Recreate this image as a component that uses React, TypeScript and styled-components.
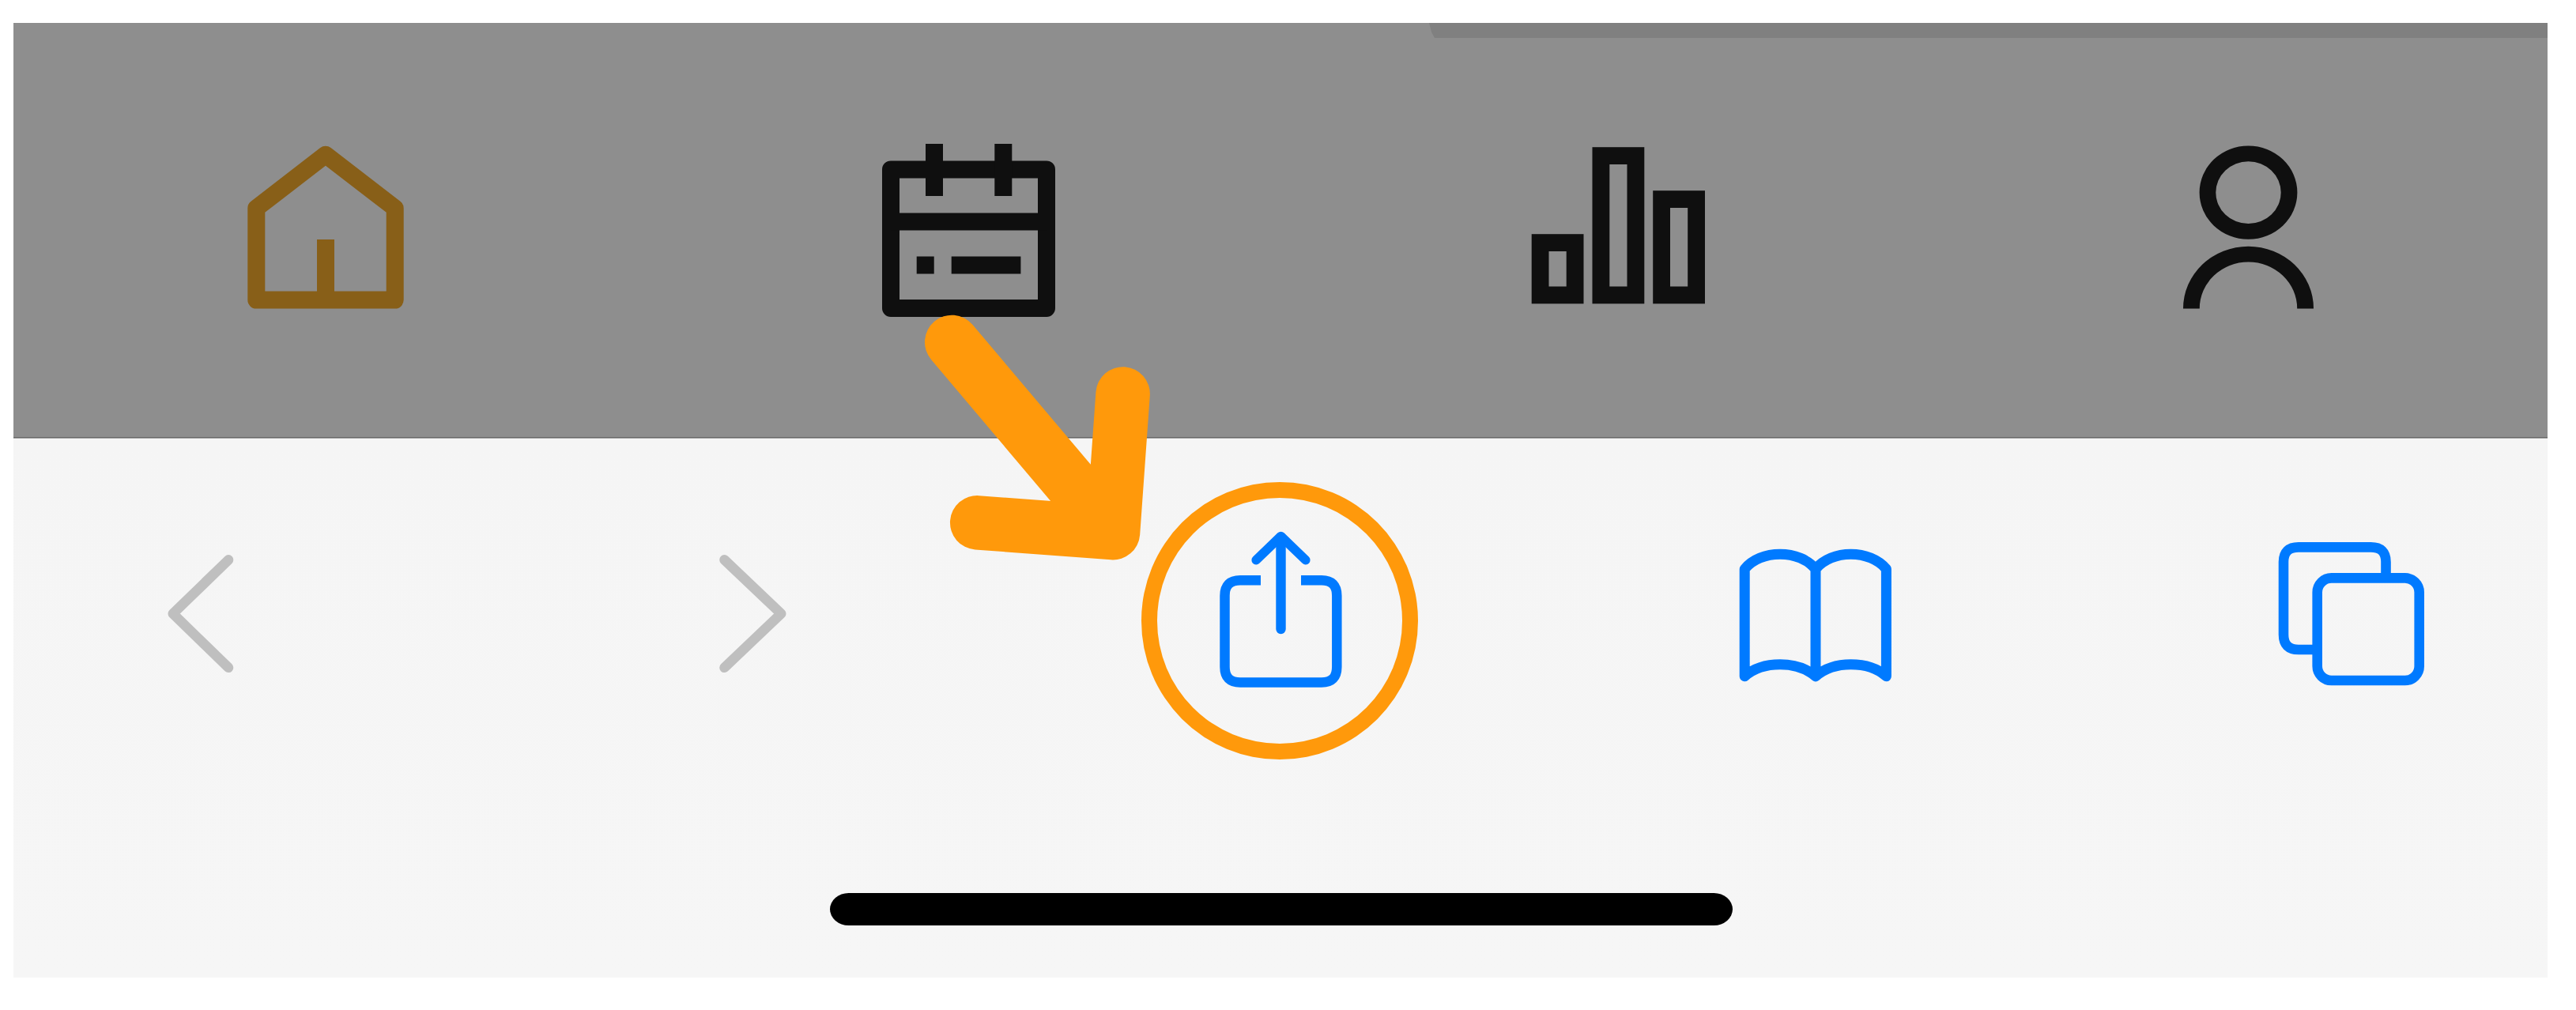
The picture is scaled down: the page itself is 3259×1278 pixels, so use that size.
import React from "react";
import styled, { createGlobalStyle } from "styled-components";

const GlobalStyle = createGlobalStyle`
  *, *::before, *::after { box-sizing: border-box; }
  body { margin: 0; background: #ffffff; font-family: "Liberation Sans", sans-serif; }
`;

const Page = styled.main`
  width: 3259px;
  height: 1278px;
  padding: 29px 36px 41px 17px;
  background: #ffffff;
  overflow: hidden;
`;

const Screen = styled.div`
  position: relative;
  display: flex;
  flex-direction: column;
  width: 3206px;
  height: 1208px;
`;

const TabBar = styled.nav`
  position: relative;
  display: flex;
  align-items: flex-start;
  gap: 600px;
  height: 524px;
  padding: 141px 0 0 283px;
  background: #8e8e8e;
`;

const SheetEdge = styled.div`
  position: absolute;
  top: 0;
  right: 0;
  width: 1415px;
  height: 19px;
  background: #808080;
  clip-path: polygon(0 0, 100% 0, 100% 100%, 7px 100%, 3px 60%);
`;

const Divider = styled.div`
  height: 2px;
  background: linear-gradient(#686868 50%, #a6a6a6 50%);
`;

const BrowserArea = styled.section`
  display: flex;
  flex-direction: column;
  align-items: flex-start;
  flex: 1;
  background: linear-gradient(#f5f5f5, #f6f6f6);
`;

const Toolbar = styled.div`
  display: flex;
  gap: 400px;
  padding: 105px 0 0 83px;
`;

const IconButton = styled.button<{ $width: number; $height: number; $tone: string }>`
  flex: none;
  width: ${(p) => p.$width}px;
  height: ${(p) => p.$height}px;
  padding: 0;
  border: 0;
  background: none;
  color: ${(p) => p.$tone};
`;

const Glyph = styled.svg`
  display: block;
  width: 100%;
  height: 100%;
  overflow: visible;
`;

const HomeIndicator = styled.div`
  width: 1142px;
  height: 41.5px;
  margin: 254.8px 0 0 1033px;
  border-radius: 24px / 20.75px;
  background: #000000;
`;

const Ring = styled.div`
  position: absolute;
  left: 1427px;
  top: 581px;
  width: 350px;
  height: 350.6px;
  border: 20px solid #ff990b;
  border-radius: 50%;
`;

const Arrow = styled.svg`
  position: absolute;
  left: 1143px;
  top: 361px;
  width: 320px;
  height: 340px;
`;

type IconProps = {
  label: string;
  x: number;
  y: number;
  width: number;
  height: number;
  tone: string;
  children: React.ReactNode;
};

function Icon({ label, x, y, width, height, tone, children }: IconProps) {
  return (
    <IconButton aria-label={label} $width={width} $height={height} $tone={tone}>
      <Glyph viewBox={`${x} ${y} ${width} ${height}`} fill="none" stroke="currentColor">
        {children}
      </Glyph>
    </IconButton>
  );
}

const GOLD = "#885f18";
const INK = "#0f0f0f";
const BLUE = "#007aff";
const MUTED = "#bfbfbf";

export default function App() {
  return (
    <>
      <GlobalStyle />
      <Page>
        <Screen>
          <TabBar>
            <SheetEdge />
            <Icon label="Home" x={300} y={170} width={214} height={240} tone={GOLD}>
              <path d="M324.3 379.6V263.4L411.9 195.8L499.7 263.4V379.6Z" strokeWidth="22" strokeLinejoin="round" />
              <path d="M412 303V379" strokeWidth="22" />
            </Icon>
            <Icon label="Calendar" x={1114} y={170} width={222} height={240} tone={INK}>
              <rect x="1127" y="214.4" width="197" height="175.6" strokeWidth="22" strokeLinejoin="round" />
              <path
                d="M1182 182V248M1269.3 182V248M1127 280.5H1324M1159.7 335.4H1181.7M1203.7 335.4H1291.4"
                strokeWidth="22"
              />
            </Icon>
            <Icon label="Statistics" x={1936} y={170} width={223} height={240} tone={INK}>
              <g strokeWidth="21.8">
                <rect x="1948.6" y="307.1" width="44" height="66.3" />
                <rect x="2025.4" y="197.1" width="44" height="176.3" />
                <rect x="2102.1" y="252.1" width="44" height="121.3" />
              </g>
            </Icon>
            <Icon label="Profile" x={2759} y={170} width={171} height={240} tone={INK}>
              <g fill="currentColor" fillRule="evenodd" stroke="none">
                <path d="M2782.6 243.6a61.9 59.1 0 1 0 123.8 0a61.9 59.1 0 1 0 -123.8 0ZM2803.3 243.6a41.2 39.4 0 1 1 82.4 0a41.2 39.4 0 1 1 -82.4 0Z" />
                <path d="M2762 390.4a82.5 78.7 0 0 1 165 0h-20.8a61.7 59 0 0 0 -123.4 0Z" />
              </g>
            </Icon>
          </TabBar>
          <Divider />
          <BrowserArea>
            <Toolbar>
              <Icon label="Back" x={100} y={660} width={308} height={215} tone={MUTED}>
                <path d="M289 708.4L218.8 776.5L289 844.8" strokeWidth="12.6" strokeLinecap="round" strokeLinejoin="round" />
              </Icon>
              <Icon label="Forward" x={808} y={660} width={290} height={215} tone={MUTED}>
                <path d="M916.5 708.4L988.2 776.5L916.5 844.8" strokeWidth="12.6" strokeLinecap="round" strokeLinejoin="round" />
              </Icon>
              <Icon label="Share" x={1498} y={660} width={245} height={215} tone={BLUE}>
                <path
                  d="M1595 734.2H1569Q1549.5 734.2 1549.5 753.7V844Q1549.5 863.6 1569 863.6H1672Q1691.3 863.6 1691.3 844V753.7Q1691.3 734.2 1672 734.2H1646"
                  strokeWidth="12.5"
                />
                <path d="M1620.5 680V796" strokeWidth="12.4" strokeLinecap="round" />
                <path d="M1589.2 708.7L1620.5 678.5L1651.8 708.7" strokeWidth="11.6" strokeLinecap="round" strokeLinejoin="round" />
              </Icon>
              <Icon label="Bookmarks" x={2143} y={660} width={308} height={215} tone={BLUE}>
                <path
                  d="M2207.2 720C2217 708 2234 701.2 2252 701.2S2287 708 2297 720C2307 708 2324 701.2 2341.5 701.2S2376.500 708 2386.400 720V855.800C2375 845.500 2360 840.800 2341.500 840.800S2309 845.500 2297 855.800C2285 845.500 2271 840.800 2252 840.800S2219 845.500 2207.200 855.800ZM2297 720V855.800"
                  strokeWidth="13"
                  strokeLinejoin="round"
                />
              </Icon>
              <Icon label="Tabs" x={2851} y={660} width={248} height={215} tone={BLUE}>
                <rect x="2931.7" y="731.4" width="129" height="129.6" rx="18" strokeWidth="12.6" />
                <path
                  d="M3018.500 728V711Q3018.500 692.400 2999.500 692.400H2908Q2889 692.400 2889 711V803Q2889 822 2908 822H2929"
                  strokeWidth="12.6"
                />
              </Icon>
            </Toolbar>
            <HomeIndicator />
          </BrowserArea>
          <Ring />
          <Arrow viewBox="1160 390 320 340" fill="none" stroke="#ff990b">
            <path
              d="M1204.200 432.900L1408 674.200M1420.600 498.400L1408 674.200L1236.200 661.300"
              strokeWidth="68.500"
              strokeLinecap="round"
              strokeLinejoin="round"
            />
          </Arrow>
        </Screen>
      </Page>
    </>
  );
}
